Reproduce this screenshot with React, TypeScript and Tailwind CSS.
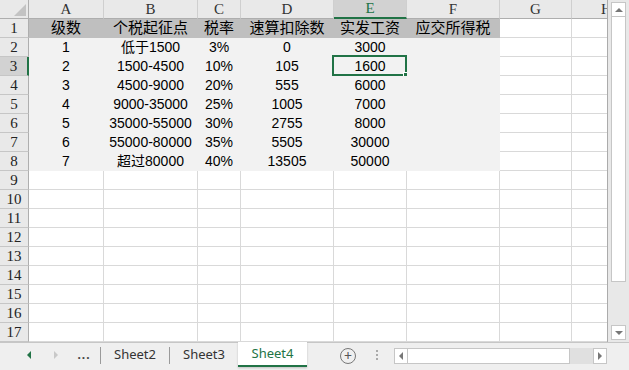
import React from "react";

const cols = [
  { n: "A", w: 75 },
  { n: "B", w: 94 },
  { n: "C", w: 43 },
  { n: "D", w: 93 },
  { n: "E", w: 73 },
  { n: "F", w: 93 },
  { n: "G", w: 72 },
  { n: "H", w: 70 },
];

const data: string[][] = [
  ["级数", "个税起征点", "税率", "速算扣除数", "实发工资", "应交所得税"],
  ["1", "低于1500", "3%", "0", "3000", ""],
  ["2", "1500-4500", "10%", "105", "1600", ""],
  ["3", "4500-9000", "20%", "555", "6000", ""],
  ["4", "9000-35000", "25%", "1005", "7000", ""],
  ["5", "35000-55000", "30%", "2755", "8000", ""],
  ["6", "55000-80000", "35%", "5505", "30000", ""],
  ["7", "超过80000", "40%", "13505", "50000", ""],
];

const cellFont = { fontFamily: '"Liberation Sans","Noto Sans CJK SC",sans-serif' };
const headFont = { fontFamily: '"Liberation Serif","Noto Sans CJK SC",serif' };

function Row({ r }: { r: number }) {
  const isData = r <= 8;
  const selRow = r === 3;
  return (
    <div className="flex h-[19px] shrink-0">
      <div
        className={`w-[29px] shrink-0 flex items-center justify-center text-[15px] text-[#222] border-b border-[#c6c6c6] ${
          selRow ? "bg-[#d2d2d2] border-r-2 border-r-[#217346]" : "bg-[#e9e9e9] border-r border-r-[#aeaeae]"
        }`}
        style={headFont}
      >
        {r}
      </div>
      {cols.map((c, ci) => {
        const inFill = isData && ci < 6;
        const txt = inFill ? data[r - 1][ci] : "";
        const fill = r === 1 && inFill ? "bg-[#bfbfbf] border-[#bfbfbf]" : inFill ? "bg-[#f2f2f2] border-[#f2f2f2]" : "bg-white border-[#d9d9d9]";
        const sel = r === 3 && ci === 4;
        return (
          <div
            key={c.n}
            style={{ width: c.w, ...cellFont }}
            className={`relative shrink-0 border-r border-b flex items-center justify-center whitespace-nowrap text-black ${fill} ${
              r === 1 ? "text-[15px]" : "text-[14px]"
            }`}
          >
            {txt}
            {sel && (
              <>
                <div className="absolute -top-[2px] -left-[2px] -right-[1px] -bottom-[1px] border-2 border-[#217346]" />
                <div className="absolute -right-[3px] -bottom-[3px] w-[6px] h-[6px] bg-[#217346] border border-white" />
              </>
            )}
          </div>
        );
      })}
    </div>
  );
}

export default function App() {
  return (
    <div className="w-[629px] h-[370px] overflow-hidden bg-white flex flex-col">
      <div className="flex h-[342px]">
        <div className="w-[607px] overflow-hidden flex flex-col shrink-0">
          {/* header */}
          <div className="flex h-[19px] shrink-0">
            <div className="relative w-[29px] shrink-0 bg-[#e9e9e9] border-r border-b border-[#aeaeae]">
              <div className="absolute right-[2px] bottom-[2px] w-0 h-0 border-l-[12px] border-l-transparent border-b-[12px] border-b-[#c3c3c3]" />
            </div>
            {cols.map((c) => {
              const sel = c.n === "E";
              return (
                <div
                  key={c.n}
                  style={{ width: c.w, ...headFont }}
                  className={`shrink-0 flex items-center justify-center text-[15px] border-r border-[#cfcfcf] ${
                    sel
                      ? "bg-[#d2d2d2] text-[#217346] border-b-2 border-b-[#217346]"
                      : "bg-[#e9e9e9] text-[#333] border-b border-b-[#aeaeae]"
                  }`}
                >
                  {c.n}
                </div>
              );
            })}
          </div>
          {Array.from({ length: 17 }, (_, i) => (
            <Row key={i} r={i + 1} />
          ))}
        </div>
        {/* vertical scrollbar */}
        <div className="flex-1 bg-[#e8e8e8] border-l border-[#ababab] flex flex-col items-center pt-[2px]">
          <div className="w-[15px] h-[15px] bg-white border border-[#c6c6c6] flex items-center justify-center">
            <div className="w-0 h-0 border-l-[4px] border-r-[4px] border-b-[4px] border-l-transparent border-r-transparent border-b-[#777]" />
          </div>
          <div className="w-[15px] h-[265px] bg-white border border-[#c6c6c6] border-t-0" />
          <div className="flex-1" />
          <div className="w-[15px] h-[15px] mb-[2px] bg-white border border-[#c6c6c6] flex items-center justify-center">
            <div className="w-0 h-0 border-l-[4px] border-r-[4px] border-t-[4px] border-l-transparent border-r-transparent border-t-[#777]" />
          </div>
        </div>
      </div>
      {/* tab bar */}
      <div
        className="h-[28px] bg-[#efefef] border-t border-[#c6c6c6] flex items-start text-[13px] text-[#333]"
        style={{ fontFamily: '"Noto Sans","Noto Sans CJK SC",sans-serif' }}
      >
        <div className="w-[44px] h-[24px] flex items-center justify-end pr-[2px] ml-[0px]">
          <div className="w-0 h-0 border-t-[4px] border-b-[4px] border-r-[4px] border-t-transparent border-b-transparent border-r-[#217346] mr-[11px]" />
        </div>
        <div className="w-[24px] h-[24px] flex items-center justify-center">
          <div className="w-0 h-0 border-t-[4px] border-b-[4px] border-l-[4px] border-t-transparent border-b-transparent border-l-[#c8c8c8]" />
        </div>
        <div className="w-[32px] h-[24px] flex items-center justify-center font-bold text-[#444] tracking-[1px] text-[12px]">...</div>
        <div className="w-px h-[17px] bg-[#9a9a9a] mt-[4px]" />
        <div className="w-[68px] h-[24px] flex items-center justify-center">Sheet2</div>
        <div className="w-px h-[17px] bg-[#9a9a9a] mt-[4px]" />
        <div className="w-[68px] h-[24px] flex items-center justify-center">Sheet3</div>
        <div className="w-[69px] h-[25px] -mt-px bg-white border-b-2 border-[#217346] shadow-[0_1px_2px_rgba(0,0,0,0.2)] flex items-center justify-center text-[#217346]">
          Sheet4
        </div>
        <div className="w-[33px]" />
        <div className="w-[16px] h-[16px] mt-[5px] rounded-full border border-[#777] flex items-center justify-center text-[#555] text-[14px] leading-none">
          +
        </div>
        <div className="w-[22px] h-[24px] flex flex-col items-center justify-center gap-[2px] ml-[10px]">
          <div className="w-[2px] h-[2px] bg-[#aaa]" />
          <div className="w-[2px] h-[2px] bg-[#aaa]" />
          <div className="w-[2px] h-[2px] bg-[#aaa]" />
        </div>
        <div className="ml-[6px] mt-[5px] flex h-[16px]">
          <div className="w-[14px] h-[16px] bg-white border border-[#c6c6c6] flex items-center justify-center">
            <div className="w-0 h-0 border-t-[4px] border-b-[4px] border-r-[4px] border-t-transparent border-b-transparent border-r-[#777]" />
          </div>
          <div className="w-[162px] h-[16px] bg-white border border-[#c6c6c6] border-l-0" />
          <div className="w-[23px] h-[16px] bg-[#e0e0e0]" />
          <div className="w-[14px] h-[16px] bg-white border border-[#c6c6c6] flex items-center justify-center">
            <div className="w-0 h-0 border-t-[4px] border-b-[4px] border-l-[4px] border-t-transparent border-b-transparent border-l-[#777]" />
          </div>
        </div>
      </div>
    </div>
  );
}
